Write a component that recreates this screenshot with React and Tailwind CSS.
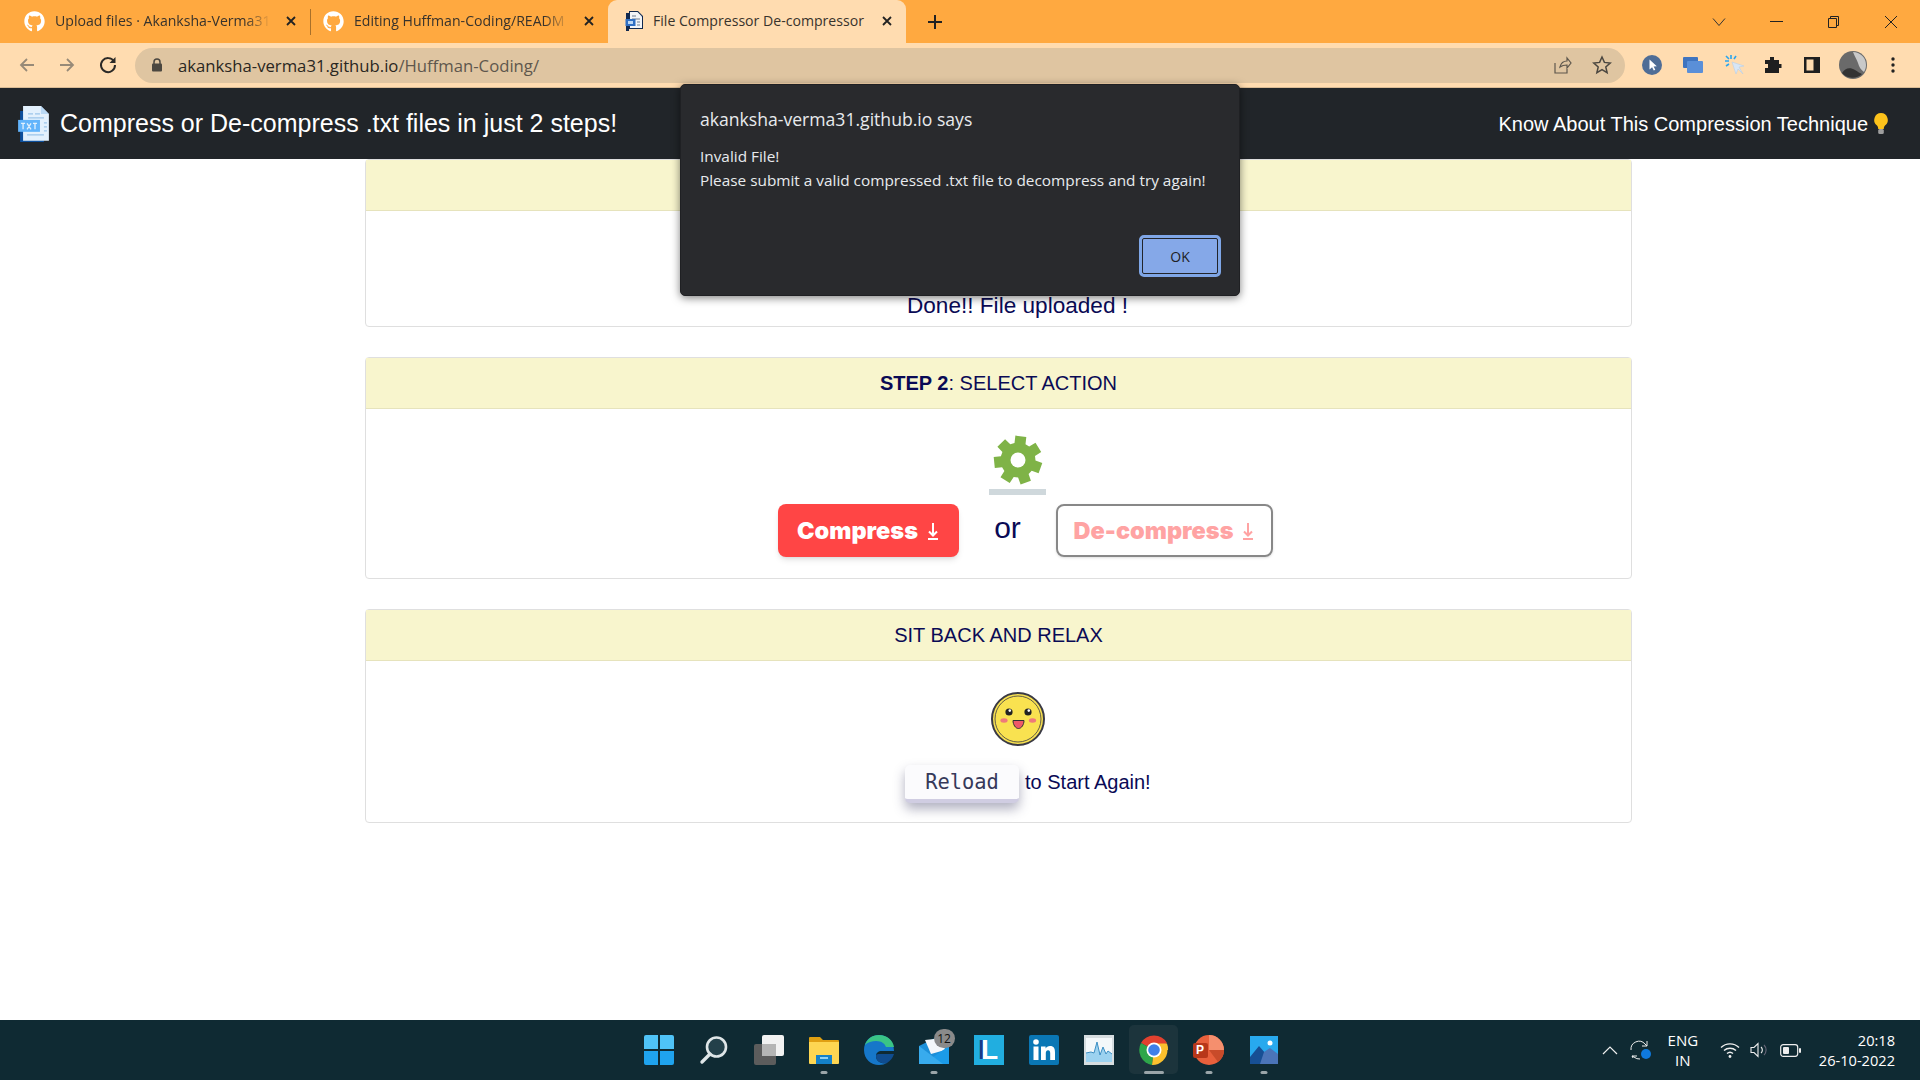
import React from "react";
import { FaGithub } from "react-icons/fa";

const FileIcon = ({ size = 20 }) => (
  <svg width={size} height={size * 1.18} viewBox="0 0 32 38" className="shrink-0">
    <path fill="#0d4f9c" d="M2 6h24v32H2z" />
    <path fill="#e3f1fd" d="M5 1h18l8 8v27H5z" />
    <path fill="#b9d9f5" d="M23 1l8 8h-8z" />
    <path stroke="#9cc5ea" strokeWidth="1.2" d="M10 9h5M17 9h5M10 13h16M26 18h3M26 22h3M26 26h3M9 30h17" />
    <rect x="0" y="15" width="22" height="12" fill="#62b4fb" />
    <path stroke="#e3f1fd" strokeWidth="1.3" fill="none" d="M3 18.5h4M5 18.5v6M9 18.5l4 6M13 18.5l-4 6M15 18.5h4M17 18.5v6" />
  </svg>
);

const TabFile = () => (
  <svg width="18" height="20" viewBox="0 0 18 20" className="shrink-0">
    <path fill="#12294f" d="M1 2h3V0h9l5 5v13H4v2H1z" />
    <path fill="#f2f4f7" d="M5 1h7.500L17 5.500V17H5z" />
    <path stroke="#6b7a90" strokeWidth="1" d="M7 5h4M7 8h8M12 11h3M12 14h3" />
    <rect x="0.500" y="8" width="10" height="7" fill="#2f6fc4" />
    <rect x="3" y="10" width="5" height="3" fill="#bcd8f5" />
  </svg>
);

const Close = () => (
  <svg width="12" height="12" viewBox="0 0 12 12" className="shrink-0">
    <path d="M2 2l8 8M10 2l-8 8" stroke="#222" strokeWidth="1.8" />
  </svg>
);

const Tab = ({ active, icon, title, widthClass, padClass, textClass }) => (
  <div
    className={`flex items-center h-[43px] pb-[1px] ${padClass} ${widthClass} ${
      active ? "bg-[#ffdcb0] rounded-t-[9px]" : ""
    }`}
  >
    {icon}
    <span
      className={`ml-[10px] whitespace-nowrap text-[14.1px] text-[#38332c] ${textClass} ${
        active ? "" : "[mask-image:linear-gradient(to_right,black_88%,transparent)]"
      }`}
    >
      {title}
    </span>
    <div className="ml-auto mr-[13px]">
      <Close />
    </div>
  </div>
);

const gearPoints = (() => {
  const pts = [];
  const n = 7;
  for (let i = 0; i < n; i++) {
    const a = (i / n) * Math.PI * 2 - Math.PI / 2 + 0.12;
    const w = (Math.PI * 2) / n;
    [
      [-0.36, 17.5],
      [-0.25, 24.5],
      [0.25, 24.5],
      [0.36, 17.5],
    ].forEach(([o, r]) => {
      const t = a + o * w;
      pts.push(`${(25 + r * Math.cos(t)).toFixed(1)},${(25 + r * Math.sin(t)).toFixed(1)}`);
    });
  }
  return pts.join(" ");
})();

const Gear = () => (
  <svg width="50" height="50" viewBox="0 0 50 50">
    <polygon points={gearPoints} fill="#7fb347" />
    <circle cx="25" cy="25" r="7.500" fill="#fff" />
  </svg>
);

const Smiley = () => (
  <svg width="54" height="54" viewBox="0 0 54 54">
    <circle cx="27" cy="27" r="26" fill="#f9e250" stroke="#3a3a44" strokeWidth="2" />
    <circle cx="27" cy="27" r="23" fill="none" stroke="#3a3a44" strokeWidth="0.8" />
    <circle cx="18" cy="20" r="3.6" fill="#222" />
    <circle cx="37" cy="20" r="3.6" fill="#222" />
    <circle cx="18.8" cy="18.6" r="1.3" fill="#fff" />
    <circle cx="37.8" cy="18.6" r="1.3" fill="#fff" />
    <ellipse cx="13" cy="28.5" rx="3.6" ry="2.2" fill="#ef7a7a" />
    <ellipse cx="41.5" cy="28.5" rx="3.6" ry="2.2" fill="#ef7a7a" />
    <path d="M22 28.5h11c0 4-2.4 8-5.5 8s-5.5-4-5.5-8z" fill="#ef5a68" stroke="#333" strokeWidth="1" />
  </svg>
);

const Bulb = () => (
  <svg width="16" height="24" viewBox="0 0 16 24" className="shrink-0 ml-[5px]">
    <path d="M8 1a7 7 0 0 0-4 12.6c.8.8 1.2 2 1.2 3.4h5.6c0-1.4.4-2.6 1.2-3.4A7 7 0 0 0 8 1z" fill="#fcc21b" />
    <rect x="5.2" y="17" width="5.6" height="5" rx="1.5" fill="#9e9e9e" />
  </svg>
);

const Card = ({ header, children }) => (
  <section className="border border-[#dfdfdf] rounded-[4px] bg-white">
    <div className="h-[51px] bg-[#f8f5cd] border-b border-[#e6e3bc] flex items-center justify-center text-[20px] text-[#0a0a55]">
      {header}
    </div>
    {children}
  </section>
);

const Btn = ({ children, className }) => (
  <div className={`h-[53px] pt-[1px] flex items-center justify-center rounded-[8px] text-[23.5px] font-black font-['Inter',sans-serif] ${className}`}>
    {children}
  </div>
);

const Arrow = ({ color }) => (
  <svg width="14" height="20" viewBox="0 0 14 20" className="ml-[8px]">
    <path d="M7 2v12M3 10.5L7 14.5l4-4M2 18h10" stroke={color} strokeWidth="2" fill="none" />
  </svg>
);

const TB = ({ children, mark, highlight }) => (
  <div className="relative w-[55px] h-[60px] flex items-center justify-center">
    {highlight && <div className="absolute left-[3px] top-[5px] w-[49px] h-[49px] rounded-[5px] bg-[#1c343c]" />}
    <div className="relative">{children}</div>
    {mark && (
      <div className={`absolute bottom-[6px] left-1/2 -translate-x-1/2 h-[3px] rounded-full bg-[#9aa5a9] ${highlight ? "w-[20px]" : "w-[7px]"}`} />
    )}
  </div>
);

export default function App() {
  return (
    <div className="relative w-full h-screen overflow-hidden flex flex-col bg-white font-['Liberation_Sans',sans-serif]">
      {/* Tab strip */}
      <div className="h-[43px] bg-[#ffa940] flex items-center shrink-0 font-['Open_Sans',sans-serif]">
        <Tab
          icon={<FaGithub size={21} color="#fff" className="shrink-0" />}
          title="Upload files · Akanksha-Verma31"
          widthClass="w-[310px]"
          padClass="pl-[24px]"
          textClass="w-[216px]"
        />
        <div className="w-px h-[26px] bg-[#a8702a]" />
        <Tab
          icon={<FaGithub size={21} color="#fff" className="shrink-0" />}
          title="Editing Huffman-Coding/READM"
          widthClass="w-[297px]"
          padClass="pl-[12px]"
          textClass="w-[216px]"
        />
        <Tab active icon={<TabFile />} title="File Compressor De-compressor" widthClass="w-[298px]" padClass="pl-[17px]" textClass="" />
        <svg width="16" height="16" viewBox="0 0 16 16" className="ml-[21px]">
          <path d="M8 1v14M1 8h14" stroke="#222" strokeWidth="2" />
        </svg>
        <div className="ml-auto flex items-center">
          <svg width="14" height="10" viewBox="0 0 14 10" className="mr-[44px]">
            <path d="M1 1.5l6 7 6-7" stroke="#333" strokeWidth="1" fill="none" />
          </svg>
          <div className="w-[13px] h-px bg-[#222] mr-[44px]" />
          <svg width="13" height="14" viewBox="0 0 13 14" className="mr-[44px]">
            <path d="M1.5 3.5h8v9h-8zM3.5 3.5v-2h8v9h-2" stroke="#222" strokeWidth="1" fill="none" />
          </svg>
          <svg width="14" height="14" viewBox="0 0 14 14" className="mr-[22px]">
            <path d="M1 1l12 12M13 1L1 13" stroke="#222" strokeWidth="1" />
          </svg>
        </div>
      </div>

      {/* Toolbar */}
      <div className="h-[45px] bg-[#ffdcb0] flex items-center shrink-0 border-b border-[#d9bb94] font-['Open_Sans',sans-serif]">
        <svg width="18" height="18" viewBox="0 0 18 18" className="ml-[18px]">
          <path d="M16 9H3M9 3L3 9l6 6" stroke="#978a78" strokeWidth="1.8" fill="none" />
        </svg>
        <svg width="18" height="18" viewBox="0 0 18 18" className="ml-[22px]">
          <path d="M2 9h13M9 3l6 6-6 6" stroke="#978a78" strokeWidth="1.8" fill="none" />
        </svg>
        <svg width="20" height="20" viewBox="0 0 20 20" className="ml-[22px]">
          <path d="M16 6.5A7 7 0 1 0 17 10" stroke="#2c2a27" strokeWidth="2" fill="none" />
          <path d="M17.5 2v6h-6z" fill="#2c2a27" />
        </svg>
        <div className="ml-[17px] w-[1490px] h-[35px] rounded-full bg-[#dfc5a1] flex items-center">
          <svg width="12" height="14" viewBox="0 0 12 14" className="ml-[16px]">
            <rect x="1" y="5.5" width="10" height="8" rx="1" fill="#4b4740" />
            <path d="M3 6V4a3 3 0 0 1 6 0v2" stroke="#4b4740" strokeWidth="1.5" fill="none" />
          </svg>
          <span className="ml-[15px] pt-[2px] text-[16.7px] text-[#2a2722] whitespace-nowrap">
            akanksha-verma31.github.io<span className="text-[#5e574d]">/Huffman-Coding/</span>
          </span>
          <div className="ml-auto flex items-center">
            <svg width="20" height="20" viewBox="0 0 20 20" className="mr-[20px]">
              <path d="M3 8v10h12v-4M8 12c1-4 4-6 7-6V3l4 5-4 5v-3c-3 0-5 .5-7 2z" stroke="#5e574d" strokeWidth="1.2" fill="none" />
            </svg>
            <svg width="20" height="20" viewBox="0 0 20 20" className="mr-[13px]">
              <path d="M10 2l2.4 5.4 5.8.6-4.4 3.9 1.3 5.8L10 14.7l-5.1 3 1.3-5.8L1.8 8l5.8-.6z" stroke="#4b4740" strokeWidth="1.5" fill="none" />
            </svg>
          </div>
        </div>
        <div className="flex items-center ml-[17px]">
          <svg width="20" height="20" viewBox="0 0 20 20">
            <circle cx="10" cy="10" r="10" fill="#4f6d96" />
            <path d="M7.5 4.5v10l2.6-2.3 1.7 3.3 1.5-.8-1.7-3.2 3.2-.3z" fill="#fff" />
          </svg>
          <svg width="22" height="20" viewBox="0 0 22 20" className="ml-[20px]">
            <rect x="1" y="2" width="15" height="11" rx="1" fill="#3f74bf" />
            <rect x="5" y="6" width="16" height="12" rx="1" fill="#5a8fd8" />
          </svg>
          <svg width="22" height="24" viewBox="0 0 22 24" className="ml-[19px]">
            <path d="M9 9l4 12 2-5 5 5-4-7 5-1z" fill="#d8e6f5" stroke="#b9cfe6" strokeWidth="0.6" />
            <path d="M8 2v4M2 8h4M3 3l3 3M13 3l-2 3M3 13l3-2" stroke="#2aa5ee" strokeWidth="1.6" />
          </svg>
          <svg width="20" height="20" viewBox="0 0 20 20" className="ml-[18px]">
            <path d="M7 2h4v3h5v4h2.5v4H16v5H2v-5h3V9H2V5h5z" fill="#1f1f1f" />
          </svg>
          <svg width="18" height="18" viewBox="0 0 18 18" className="ml-[20px]">
            <path d="M1 1h16v16H1z" fill="#1f1f1f" />
            <rect x="3.5" y="3.5" width="7" height="11" fill="#ffdcb0" />
          </svg>
          <svg width="28" height="28" viewBox="0 0 28 28" className="ml-[18px]">
            <circle cx="14" cy="14" r="14" fill="#6a6a6a" />
            <path d="M14 1a13 13 0 0 1 13 13c0 3-1 5-2 7-3-2-5-5-6-9-1-3-3-6-5-11z" fill="#c9c9c9" />
            <path d="M3 22c3-5 8-6 13-3 3 2 5 3 7 4a14 14 0 0 1-20-1z" fill="#333" />
          </svg>
          <svg width="4" height="16" viewBox="0 0 4 16" className="ml-[24px]">
            <circle cx="2" cy="2" r="1.7" fill="#222" />
            <circle cx="2" cy="8" r="1.7" fill="#222" />
            <circle cx="2" cy="14" r="1.7" fill="#222" />
          </svg>
        </div>
      </div>

      {/* Navbar */}
      <nav className="h-[71px] bg-[#212529] shrink-0 flex items-center justify-between pl-[18px] pr-[31px] text-white">
        <div className="flex items-center">
          <FileIcon size={32} />
          <span className="ml-[10px] text-[25px] whitespace-nowrap">Compress or De-compress .txt files in just 2 steps!</span>
        </div>
        <div className="flex items-center">
          <span className="text-[20px] whitespace-nowrap">Know About This Compression Technique</span>
          <Bulb />
        </div>
      </nav>

      {/* Page */}
      <main className="flex-1 pl-[365px] pr-[288px] flex flex-col gap-[30px] text-[#0a0a55]">
        <Card header={<span>&nbsp;</span>}>
          <div className="h-[115px] flex items-end justify-center pl-[38px] pb-[2px]">
            <span className="text-[22.6px] leading-[36px]">Done!! File uploaded !</span>
          </div>
        </Card>
        <Card
          header={
            <span>
              <b>STEP 2</b>: SELECT ACTION
            </span>
          }
        >
          <div className="h-[169px] pl-[412px] flex flex-col items-start">
            <div className="ml-[211px] mt-[26px] flex flex-col items-center w-[57px] h-[66px]">
              <Gear />
              <div className="mt-[4px] w-[57px] h-[6px] bg-[#cfd8dc]" />
            </div>
            <div className="flex items-start mt-[3px]">
              <Btn className="w-[181px] bg-[#ff4545] text-white shadow-md">
                Compress
                <Arrow color="#fff" />
              </Btn>
              <span className="w-[97px] text-center text-[30px] leading-[48px]">or</span>
              <Btn className="w-[217px] border-2 border-[#888] text-[#ffa3a3] shadow-sm">
                De-compress
                <Arrow color="#ffa3a3" />
              </Btn>
            </div>
          </div>
        </Card>
        <Card header="SIT BACK AND RELAX">
          <div className="h-[161px] flex flex-col">
            <div className="ml-[625px] mt-[31px]">
              <Smiley />
            </div>
            <div className="ml-[539px] mt-[19px] flex items-center">
              <div className="w-[114px] h-[38px] flex items-center justify-center rounded-[5px] bg-[#fbfbfd] border-b-[4px] border-[#d0cde2] shadow-[0_6px_12px_rgba(60,60,100,0.4)] text-[20.4px] text-[#36395a] font-['DejaVu_Sans_Mono',monospace]">
                Reload
              </div>
              <span className="ml-[6px] mb-[4px] text-[20px]">to Start Again!</span>
            </div>
          </div>
        </Card>
      </main>

      {/* Taskbar */}
      <footer className="h-[60px] shrink-0 bg-[#0f2a33] grid grid-cols-[1fr_auto_1fr] items-center text-white font-['Open_Sans',sans-serif]">
        <div />
        <div className="flex items-center ml-[2px]">
          <TB>
            <svg width="30" height="30" viewBox="0 0 30 30">
              <path d="M0 2a2 2 0 0 1 2-2h12v14H0zM16 0h12a2 2 0 0 1 2 2v12H16z" fill="#4fc3f7" />
              <path d="M16 16h14v12a2 2 0 0 1-2 2H16zM0 16h14v14H2a2 2 0 0 1-2-2z" fill="#1fa3ee" />
            </svg>
          </TB>
          <TB>
            <svg width="30" height="30" viewBox="0 0 30 30">
              <circle cx="17.5" cy="12" r="9.5" fill="#23404a" stroke="#dfe6e8" strokeWidth="2.6" />
              <path d="M11 19l-8 8" stroke="#dfe6e8" strokeWidth="3.4" strokeLinecap="round" />
            </svg>
          </TB>
          <TB>
            <svg width="30" height="30" viewBox="0 0 30 30">
              <rect x="0" y="9" width="22" height="21" rx="2" fill="#5c5c5c" />
              <rect x="8" y="0" width="22" height="21" rx="2" fill="#f2f2f2" />
              <rect x="8" y="9" width="14" height="12" fill="#b5b5b5" />
            </svg>
          </TB>
          <TB mark>
            <svg width="30" height="28" viewBox="0 0 30 28">
              <path d="M0 2a1 1 0 0 1 1-1h10l3 3h15a1 1 0 0 1 1 1v4H0z" fill="#e0a012" />
              <path d="M0 6h30v21a1 1 0 0 1-1 1H1a1 1 0 0 1-1-1z" fill="#fdd652" />
              <rect x="7" y="19" width="16" height="9" fill="#1481c9" />
              <rect x="11" y="21" width="8" height="2" fill="#8fd1f5" />
            </svg>
          </TB>
          <TB>
            <svg width="30" height="30" viewBox="0 0 30 30">
              <path d="M15 0C6 0 0 6.500 0 15c0 9 7 15 15 15 3 0 6-1 8-2-5 1-11-1-11-7 0-3 2-5 6-5h12C30 7 24 0 15 0z" fill="#1677c9" />
              <path d="M15 0C8 0 3 4 1 10c3-3 7-4 11-4 6 0 9 3 10 6h8C29 5 23 0 15 0z" fill="#3ac486" />
              <path d="M12 21c0 6 6 8 11 7 3-2 6-5 7-9H18c-4 0-6 0-6 2z" fill="#0f4c8f" />
            </svg>
          </TB>
          <TB mark>
            <div className="relative w-[30px] h-[28px]">
              <svg width="30" height="28" viewBox="0 0 30 28">
                <path d="M0 10L16 2l14 8v18H0z" fill="#1b8fd8" />
                <path d="M6 4l18-2 2 12-14 4z" fill="#f4f7fa" />
                <path d="M0 10l14 11 16-11v18H0z" fill="#1b9be8" />
                <path d="M0 10v18h24z" fill="#4cb6f0" opacity="0.6" />
              </svg>
              <div className="absolute -top-[7px] left-[15px] w-[21px] h-[19px] rounded-full bg-[#8a8a8a] text-[#111] text-[12px] leading-[19px] text-center">12</div>
            </div>
          </TB>
          <TB>
            <div className="w-[30px] h-[30px] bg-[#21aee0] flex items-center justify-center pl-[2px] text-white font-bold text-[28px] leading-none [text-shadow:-3px_0_0_#1a3a8a] font-['Liberation_Sans',sans-serif]">L</div>
          </TB>
          <TB>
            <svg width="30" height="30" viewBox="0 0 30 30">
              <rect width="30" height="30" rx="2" fill="#0a77b5" />
              <circle cx="7" cy="7" r="2.8" fill="#fff" />
              <path d="M4.500 11.500h5V25h-5zM12 11.500h4.600v1.900c.8-1.300 2.300-2.300 4.400-2.300 4 0 5 2.500 5 6.300V25h-4.800v-6.700c0-1.700-.3-3.100-2.100-3.100s-2.300 1.400-2.300 3.100V25H12z" fill="#fff" />
            </svg>
          </TB>
          <TB>
            <svg width="30" height="30" viewBox="0 0 30 30">
              <rect width="30" height="30" fill="#d6dde0" />
              <rect x="2" y="3" width="26" height="24" fill="#f4f8fa" />
              <path d="M2 18l5-1 3 1 3-11 3 13 3-8 3 7 2-3 4 3v8H2z" fill="#9cd2f0" />
              <path d="M2 18l5-1 3 1 3-11 3 13 3-8 3 7 2-3 4 3" fill="none" stroke="#3d8fc4" strokeWidth="1" />
            </svg>
          </TB>
          <TB mark highlight>
            <svg width="30" height="30" viewBox="0 0 30 30">
              <path d="M15 15L2 8a15 15 0 0 1 26 0z" fill="#e2412f" />
              <path d="M15 15L2 8a15 15 0 0 0 11 21.900z" fill="#2ea64a" />
              <path d="M15 15h13.500A15 15 0 0 1 13 29.900z" fill="#fbc02d" />
              <path d="M15 8.500h13a15 15 0 0 1 1 6.500H15z" fill="#fbc02d" />
              <circle cx="15" cy="15" r="7.500" fill="#fff" />
              <circle cx="15" cy="15" r="5.800" fill="#3f7fe8" />
            </svg>
          </TB>
          <TB mark>
            <div className="relative w-[30px] h-[30px]">
              <svg width="30" height="30" viewBox="0 0 30 30">
                <circle cx="15" cy="15" r="15" fill="#e8603c" />
                <path d="M15 0a15 15 0 0 1 15 15H15z" fill="#f58f6e" />
                <path d="M15 15h15a15 15 0 0 1-6 12z" fill="#c84b2a" />
              </svg>
              <div className="absolute left-[-1px] top-[8px] w-[15px] h-[15px] rounded-[2px] bg-[#b7371a] text-white text-[12px] leading-[15px] text-center font-bold font-['Liberation_Sans',sans-serif]">P</div>
            </div>
          </TB>
          <TB mark>
            <svg width="28" height="28" viewBox="0 0 28 28">
              <rect width="28" height="28" fill="#28a9ee" />
              <circle cx="20" cy="7" r="2.500" fill="#fff" />
              <path d="M0 21l9-11 7 8 4-3 8 6v7H0z" fill="#174f94" />
              <path d="M14 16l6-4 8 6v10H10z" fill="#4b74b8" />
            </svg>
          </TB>
        </div>
        <div className="flex items-center justify-end pr-[25px]">
          <svg width="16" height="9" viewBox="0 0 16 9" className="mr-[12px]">
            <path d="M1 8l7-7 7 7" stroke="#eee" strokeWidth="1.2" fill="none" />
          </svg>
          <svg width="22" height="22" viewBox="0 0 22 22" className="mr-[10px]">
            <path d="M1 11a8 8 0 0 1 14-6l2 2M17 2v5h-5M3 19l-1-2h5M2 17l2 1a8 8 0 0 0 6 2" stroke="#eee" strokeWidth="1" fill="none" />
            <circle cx="16" cy="15" r="5" fill="#0f79dd" />
          </svg>
          <div className="w-[42px] text-center text-[15px] leading-[20px] mr-[16px]">
            ENG
            <br />
            IN
          </div>
          <svg width="20" height="16" viewBox="0 0 20 16" className="mr-[10px]">
            <path d="M1 5.500a13 13 0 0 1 18 0M4 8.500a9 9 0 0 1 12 0M7 11.500a4.500 4.500 0 0 1 6 0" stroke="#eee" strokeWidth="1.4" fill="none" />
            <circle cx="10" cy="14.500" r="1.400" fill="#eee" />
          </svg>
          <svg width="20" height="16" viewBox="0 0 20 16" className="mr-[10px]">
            <path d="M1 5.500h3l4-4v13l-4-4H1z" stroke="#eee" strokeWidth="1.1" fill="none" />
            <path d="M11 5a4 4 0 0 1 0 6" stroke="#eee" strokeWidth="1.1" fill="none" />
            <path d="M14 3a7 7 0 0 1 0 10" stroke="#667" strokeWidth="1.1" fill="none" />
          </svg>
          <svg width="21" height="13" viewBox="0 0 21 13" className="mr-[18px]">
            <rect x="0.700" y="0.700" width="17" height="11.600" rx="2.500" stroke="#eee" strokeWidth="1.2" fill="none" />
            <rect x="3" y="3" width="6" height="7" rx="1" fill="#eee" />
            <rect x="19" y="4" width="2" height="5" rx="1" fill="#eee" />
          </svg>
          <div className="text-right text-[14.6px] leading-[20px]">
            20:18
            <br />
            26-10-2022
          </div>
        </div>
      </footer>

      {/* Alert dialog */}
      <div
        role="alertdialog"
        className="absolute left-[680px] top-[84px] w-[560px] h-[212px] rounded-[5px] bg-[#292a2d] border border-[#1f2023] shadow-[0_2px_8px_rgba(0,0,0,0.5)] pl-[19px] pr-[18px] pt-[22px] text-[#e8eaed] font-['Open_Sans',sans-serif]"
      >
        <div className="text-[17.6px] leading-[24px]">akanksha-verma31.github.io says</div>
        <div className="mt-[13px] text-[15.35px] leading-[24px]">
          Invalid File!
          <br />
          Please submit a valid compressed .txt file to decompress and try again!
        </div>
        <div className="absolute right-[18px] bottom-[18px] w-[82px] h-[42px] rounded-[5px] bg-[#85a8e8] border-[3px] border-[#7fa6e6] outline outline-1 -outline-offset-4 outline-[#22252b] flex items-center justify-center text-[14px] text-[#202124]">
          OK
        </div>
      </div>
    </div>
  );
}
